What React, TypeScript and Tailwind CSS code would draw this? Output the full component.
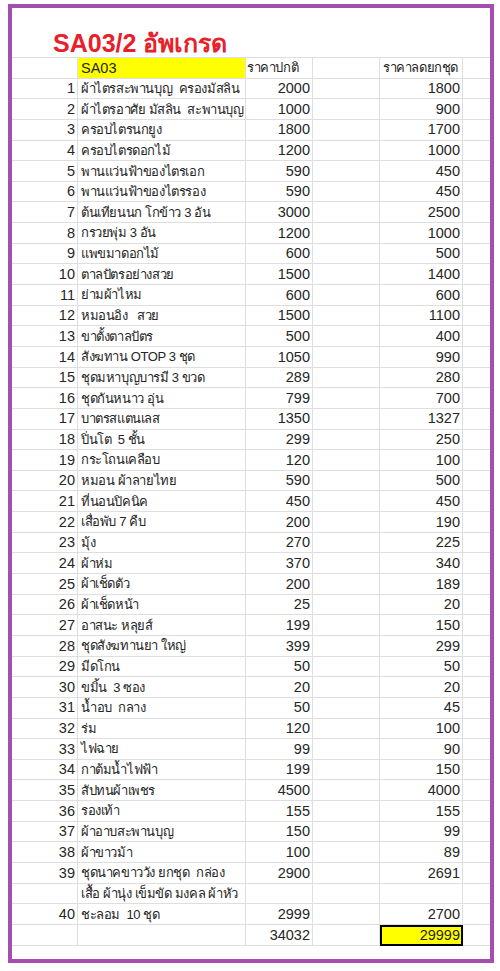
import React from "react";

type Row = { n?: string; name: string; a?: string; b?: string };

const rows: Row[] = [
  { n: "1", name: "ผ้าไตรสะพานบุญ  ครองมัสลิน", a: "2000", b: "1800" },
  { n: "2", name: "ผ้าไตรอาศัย มัสลิน  สะพานบุญ", a: "1000", b: "900" },
  { n: "3", name: "ครอบไตรนกยูง", a: "1800", b: "1700" },
  { n: "4", name: "ครอบไตรดอกไม้", a: "1200", b: "1000" },
  { n: "5", name: "พานแว่นฟ้าของไตรเอก", a: "590", b: "450" },
  { n: "6", name: "พานแว่นฟ้าของไตรรอง", a: "590", b: "450" },
  { n: "7", name: "ต้นเทียนนก โกข้าว 3 อัน", a: "3000", b: "2500" },
  { n: "8", name: "กรวยพุ่ม 3 อัน", a: "1200", b: "1000" },
  { n: "9", name: "แพขมาดอกไม้", a: "600", b: "500" },
  { n: "10", name: "ตาลปัตรอย่างสวย", a: "1500", b: "1400" },
  { n: "11", name: "ย่ามผ้าไหม", a: "600", b: "600" },
  { n: "12", name: "หมอนอิง   สวย", a: "1500", b: "1100" },
  { n: "13", name: "ขาตั้งตาลปัตร", a: "500", b: "400" },
  { n: "14", name: "สังฆทาน OTOP 3 ชุด", a: "1050", b: "990" },
  { n: "15", name: "ชุดมหาบุญบารมี 3 ขวด", a: "289", b: "280" },
  { n: "16", name: "ชุดกันหนาว อุ่น", a: "799", b: "700" },
  { n: "17", name: "บาตรสแตนเลส", a: "1350", b: "1327" },
  { n: "18", name: "ปิ่นโต  5 ชั้น", a: "299", b: "250" },
  { n: "19", name: "กระโถนเคลือบ", a: "120", b: "100" },
  { n: "20", name: "หมอน ผ้าลายไทย", a: "590", b: "500" },
  { n: "21", name: "ที่นอนปิคนิค", a: "450", b: "450" },
  { n: "22", name: "เสื่อพับ 7 คืบ", a: "200", b: "190" },
  { n: "23", name: "มุ้ง", a: "270", b: "225" },
  { n: "24", name: "ผ้าห่ม", a: "370", b: "340" },
  { n: "25", name: "ผ้าเช็ดตัว", a: "200", b: "189" },
  { n: "26", name: "ผ้าเช็ดหน้า", a: "25", b: "20" },
  { n: "27", name: "อาสนะ หลุยส์", a: "199", b: "150" },
  { n: "28", name: "ชุดสังฆทานยา ใหญ่", a: "399", b: "299" },
  { n: "29", name: "มีดโกน", a: "50", b: "50" },
  { n: "30", name: "ขมิ้น  3 ซอง", a: "20", b: "20" },
  { n: "31", name: "น้ำอบ  กลาง", a: "50", b: "45" },
  { n: "32", name: "ร่ม", a: "120", b: "100" },
  { n: "33", name: "ไฟฉาย", a: "99", b: "90" },
  { n: "34", name: "กาต้มน้ำไฟฟ้า", a: "199", b: "150" },
  { n: "35", name: "สัปทนผ้าเพชร", a: "4500", b: "4000" },
  { n: "36", name: "รองเท้า", a: "155", b: "155" },
  { n: "37", name: "ผ้าอาบสะพานบุญ", a: "150", b: "99" },
  { n: "38", name: "ผ้าขาวม้า", a: "100", b: "89" },
  { n: "39", name: "ชุดนาคขาววัง ยกชุด  กล่อง", a: "2900", b: "2691" },
  { name: "เสื้อ ผ้านุ่ง เข็มขัด มงคล ผ้าหัว" },
  { n: "40", name: "ชะลอม  10 ชุด", a: "2999", b: "2700" },
];

const grid =
  "grid grid-cols-[66px_168px_67px_67px_83px_27px] h-[20.65px]";
const cell =
  "border-r border-b border-[#dedede] flex items-center overflow-visible whitespace-pre leading-none";
const thai = " text-[13px] tracking-[-0.4px]";

export default function App() {
  return (
    <div className="w-[500px] h-[971px] bg-white font-['Liberation_Sans','Noto_Sans',sans-serif] text-[#262626] text-[14.5px]">
      <div className="ml-[8px] mt-[4px] w-[486px] h-[959px] border-4 border-[#a44fb0] flex flex-col">
        <div className="h-[49px] flex items-end pl-[41px] pb-[1px]">
          <span className="text-[25px] font-bold text-[#e8202a] leading-none">
            SA03/2 อัพเกรด
          </span>
        </div>
        <div className="border-t border-[#dedede]">
          <div className={grid}>
            <div className={cell}></div>
            <div className={cell + " bg-[#ffff00] pl-[3px]"}>SA03</div>
            <div className={cell + " pl-[1px]" + thai}>ราคาปกติ</div>
            <div className={cell}></div>
            <div className={cell + " pl-[3px]" + thai}>ราคาลดยกชุด</div>
            <div className={cell + " border-r-0"}></div>
          </div>
          {rows.map((r, i) => (
            <div key={i} className={grid}>
              <div className={cell + " justify-end pr-[2px]"}>{r.n ?? ""}</div>
              <div className={cell + " pl-[3px]" + thai}>{r.name}</div>
              <div className={cell + " justify-end pr-[2px]"}>{r.a ?? ""}</div>
              <div className={cell}></div>
              <div className={cell + " justify-end pr-[2px]"}>{r.b ?? ""}</div>
              <div className={cell + " border-r-0"}></div>
            </div>
          ))}
          <div className={grid + " h-[21.5px]"}>
            <div className={cell}></div>
            <div className={cell}></div>
            <div className={cell + " justify-end pr-[2px]"}>34032</div>
            <div className={cell}></div>
            <div className="border-2 border-black bg-[#ffff00] flex items-center justify-end pr-[1px] leading-none">
              29999
            </div>
            <div className={cell + " border-r-0"}></div>
          </div>
        </div>
      </div>
    </div>
  );
}
